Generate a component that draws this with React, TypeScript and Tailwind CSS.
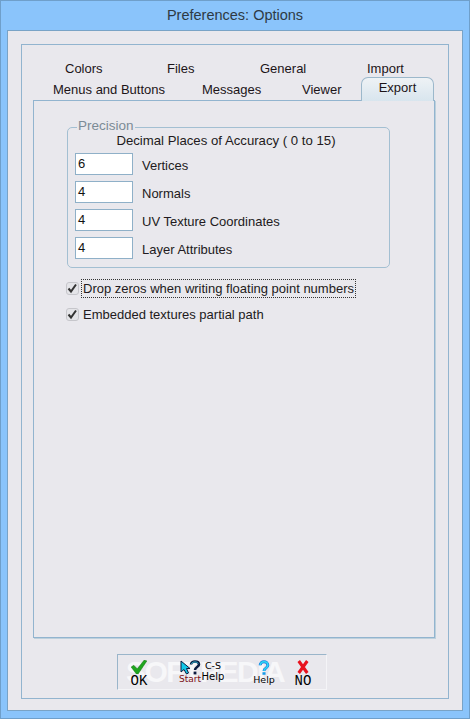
const uiFont = { fontFamily: '"Liberation Sans", Arial, sans-serif' };

function PrecisionRow({ value, label }: { value: string; label: string }) {
  return (
    <div className="flex h-[28px] items-start">
      <div className="h-[22px] w-[58px] border border-[#8fb0c8] bg-white pl-[2px] text-[13px] leading-[20px] text-[#111]">
        {value}
      </div>
      <span className="ml-[9px] mt-[4px] text-[13px] leading-[18px] text-[#221a20]">{label}</span>
    </div>
  );
}

function CheckRow({ label, focused }: { label: string; focused?: boolean }) {
  return (
    <div className="flex h-[26px] items-center">
      <div className="flex h-[13px] w-[13px] items-center justify-center rounded-[3px] border border-[#c6c6cb] bg-[#e4e4e8]">
        <svg viewBox="0 0 13 13" className="h-[13px] w-[13px] shrink-0" fill="none" stroke="#333" strokeWidth="2">
          <path d="M2.5 6.5 5 9.5 10 2.5" />
        </svg>
      </div>
      <span
        className={`ml-[2px] px-[1px] text-[13px] leading-[17px] text-[#221a20] ${focused ? "border border-dotted border-[#333]" : "border border-transparent"}`}
      >
        {label}
      </span>
    </div>
  );
}

function ToolLabel({ children, className }: { children: string; className: string }) {
  return <span className={`block whitespace-nowrap font-["DejaVu_Sans"] leading-none ${className}`}>{children}</span>;
}

function ToolCaption({ children }: { children: string }) {
  return <span className="mt-[1px] block whitespace-nowrap font-['Liberation_Mono'] text-[14px] leading-[12px]">{children}</span>;
}

export default function App() {
  return (
    <div
      style={uiFont}
      className="relative flex h-[719px] w-[470px] flex-col overflow-hidden border border-[#6f9fca] bg-[#8ac4fb]"
    >
      <div className="flex h-[29px] shrink-0 items-center justify-center pt-[1px] text-[14.5px] text-[#2e3a44]">
        Preferences: Options
      </div>

      <div className="mx-[6px] mb-[7px] flex min-h-0 flex-1 flex-col border border-[#79a3c6] bg-[#e9e8ed] px-[13px] pb-[11px] pt-[13px]">
        <div className="flex min-h-0 flex-1 flex-col border border-[#92b4cf] pb-[60px] pl-[11px] pr-[13px]">
          <div className="relative h-[55px] shrink-0 text-[13px] text-[#1c1418]">
            <div className="flex h-[33px] items-end pb-[1px] pl-[32px] leading-[16px]">
              <span className="w-[102px]">Colors</span>
              <span className="w-[93px]">Files</span>
              <span className="w-[107px]">General</span>
              <span>Import</span>
            </div>
            <div className="flex items-start pl-[20px] pt-[4px] leading-[16px]">
              <span className="w-[149px]">Menus and Buttons</span>
              <span className="w-[100px]">Messages</span>
              <span>Viewer</span>
            </div>
            <div className="absolute bottom-[-1px] right-[1px] flex h-[24px] w-[73px] justify-center rounded-t-[7px] border border-b-0 border-[#9cb8cb] bg-gradient-to-b from-[#eef2f5] to-[#d8e5ee] pt-[2px] leading-[16px]">
              Export
            </div>
          </div>

          <div className="min-h-0 flex-1 border border-[#92b4cf] pl-[33px] pt-[26px] shadow-[1px_1px_0_#bdd0dc]">
            <div className="relative h-[141px] w-[323px] rounded-[5px] border border-[#a3bfd2] pl-[7px] pt-[25px]">
              <span className="absolute left-[9px] top-[-10px] bg-[#e9e8ed] px-[1px] text-[13.5px] leading-[16px] text-[#7c8b96]">
                Precision
              </span>
              <div className="absolute left-0 right-0 top-[4px] pr-[5px] text-center text-[13.2px] leading-[18px] text-[#221a20]">
                Decimal Places of Accuracy ( 0 to 15)
              </div>
              <PrecisionRow value="6" label="Vertices" />
              <PrecisionRow value="4" label="Normals" />
              <PrecisionRow value="4" label="UV Texture Coordinates" />
              <PrecisionRow value="4" label="Layer Attributes" />
            </div>

            <div className="ml-[-1px] mt-[7px]">
              <CheckRow label="Drop zeros when writing floating point numbers" focused />
              <CheckRow label="Embedded textures partial path" />
            </div>
          </div>
        </div>
      </div>

      <div className="absolute left-[116px] top-[653px] h-[36px] w-[210px] overflow-hidden border border-[#9ab5ca] border-b-[#f4f4f7] border-r-[#f4f4f7] bg-[#e9e8ed] text-black">
        <span className="absolute left-[8px] top-[2px] whitespace-nowrap text-[30px] font-bold leading-[30px] tracking-[-1.5px] text-[#f7f7f9]">
          SOFTPEDIA
        </span>
        <div className="relative flex h-full">
          <div className="ml-[6px] mt-[5px] flex w-[30px] flex-col items-center">
            <svg viewBox="0 0 18 16" className="h-[14px] w-[16px] shrink-0">
              <path d="M0 8 3 6 7 10 15 0 18 1 8 16 6 16Z" fill="#1fa51f" stroke="#0c6f0c" strokeWidth="0.5" />
            </svg>
            <ToolCaption>OK</ToolCaption>
          </div>
          <div className="ml-[25px] mt-[5px] flex w-[22px] flex-col items-center">
            <svg viewBox="0 0 21 15" className="h-[15px] w-[21px] shrink-0">
              <path d="M1 1 1 12 4 9.5 6.5 14 8.5 13 6.5 8.5 10 8.5Z" fill="#12c8e8" stroke="#0b1b40" strokeWidth="1" />
              <path d="M11 4.5C11 0.5 19 0.5 19 4.5 19 7 15 7 15 10" fill="none" stroke="#0b1b40" strokeWidth="2.6" />
              <path d="M11.5 4C12 1.5 17 1.2 18.2 3.5" fill="none" stroke="#35d4ee" strokeWidth="0.9" />
              <rect x="13.6" y="11.6" width="2.8" height="2.8" fill="#0b1b40" />
            </svg>
            <ToolLabel className="text-[9px] text-[#7a0c14]">Start</ToolLabel>
          </div>
          <div className="ml-[1px] mt-[6px] flex w-[22px] flex-col items-center">
            <ToolLabel className="text-[9.5px]">C-S</ToolLabel>
            <ToolLabel className="mt-[1px] text-[10px]">Help</ToolLabel>
          </div>
          <div className="ml-[28px] mt-[5px] flex w-[24px] flex-col items-center">
            <svg viewBox="0 0 14 17" className="h-[15px] w-[12px] shrink-0">
              <path d="M2.5 6C2.5 0.5 11.5 0.5 11.5 6 11.5 9.5 7 9 7 12.5" fill="none" stroke="#1a78e0" strokeWidth="3.4" />
              <path d="M2.5 6C2.5 0.5 11.5 0.5 11.5 6 11.5 9.5 7 9 7 12.5" fill="none" stroke="#2fd8f5" strokeWidth="1.8" />
              <rect x="5.2" y="14" width="3.6" height="3" fill="#1a9be8" />
            </svg>
            <ToolLabel className="text-[9.5px]">Help</ToolLabel>
          </div>
          <div className="ml-[17px] mt-[5px] flex w-[20px] flex-col items-center">
            <svg viewBox="0 0 14 16" className="h-[14px] w-[12px] shrink-0" stroke="#e8121e" strokeWidth="3.6" fill="none">
              <path d="M2 1 12 15M12 1 2 15" />
            </svg>
            <ToolCaption>NO</ToolCaption>
          </div>
        </div>
      </div>
    </div>
  );
}
